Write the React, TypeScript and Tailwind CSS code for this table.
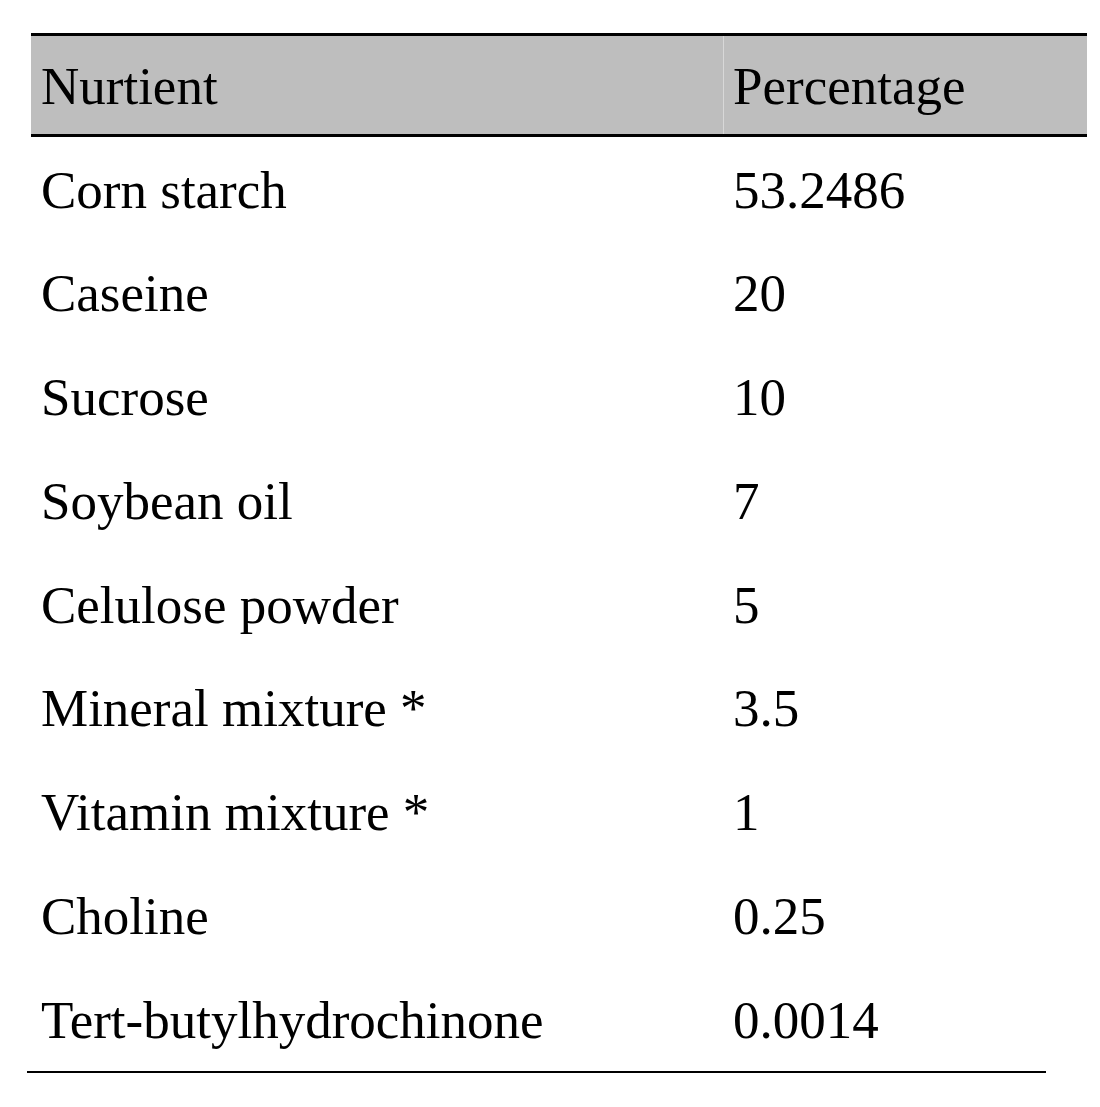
const rows: [string, string][] = [
  ['Corn starch', '53.2486'],
  ['Caseine', '20'],
  ['Sucrose', '10'],
  ['Soybean oil', '7'],
  ['Celulose powder', '5'],
  ['Mineral mixture *', '3.5'],
  ['Vitamin mixture *', '1'],
  ['Choline', '0.25'],
  ['Tert-butylhydrochinone', '0.0014'],
];

export default function App() {
  return (
    <div
      className="w-[1100px] h-[1107px] bg-white text-black pt-[33px]"
      style={{ fontFamily: '"Liberation Serif", serif' }}
    >
      <div className="ml-[31px] w-[1056px] flex bg-[#bebebe] border-t-[3px] border-b-[3px] border-black h-[104px] items-center text-[53px]">
        <div className="w-[693px] pl-[10px] pt-[3px] border-r border-[#d8d8d8] self-stretch flex items-center">Nurtient</div>
        <div className="flex-1 pl-[9px] pt-[3px]">Percentage</div>
      </div>
      <div className="ml-[31px] w-[1056px] flex flex-col">
        {rows.map(([name, value]) => (
          <div key={name} className="flex h-[103.75px] pt-[3px] items-center text-[53px]">
            <div className="w-[693px] pl-[10px]">{name}</div>
            <div className="flex-1 pl-[9px]">{value}</div>
          </div>
        ))}
      </div>
      <div className="ml-[27px] w-[1019px] h-[2px] bg-black" />
    </div>
  );
}
